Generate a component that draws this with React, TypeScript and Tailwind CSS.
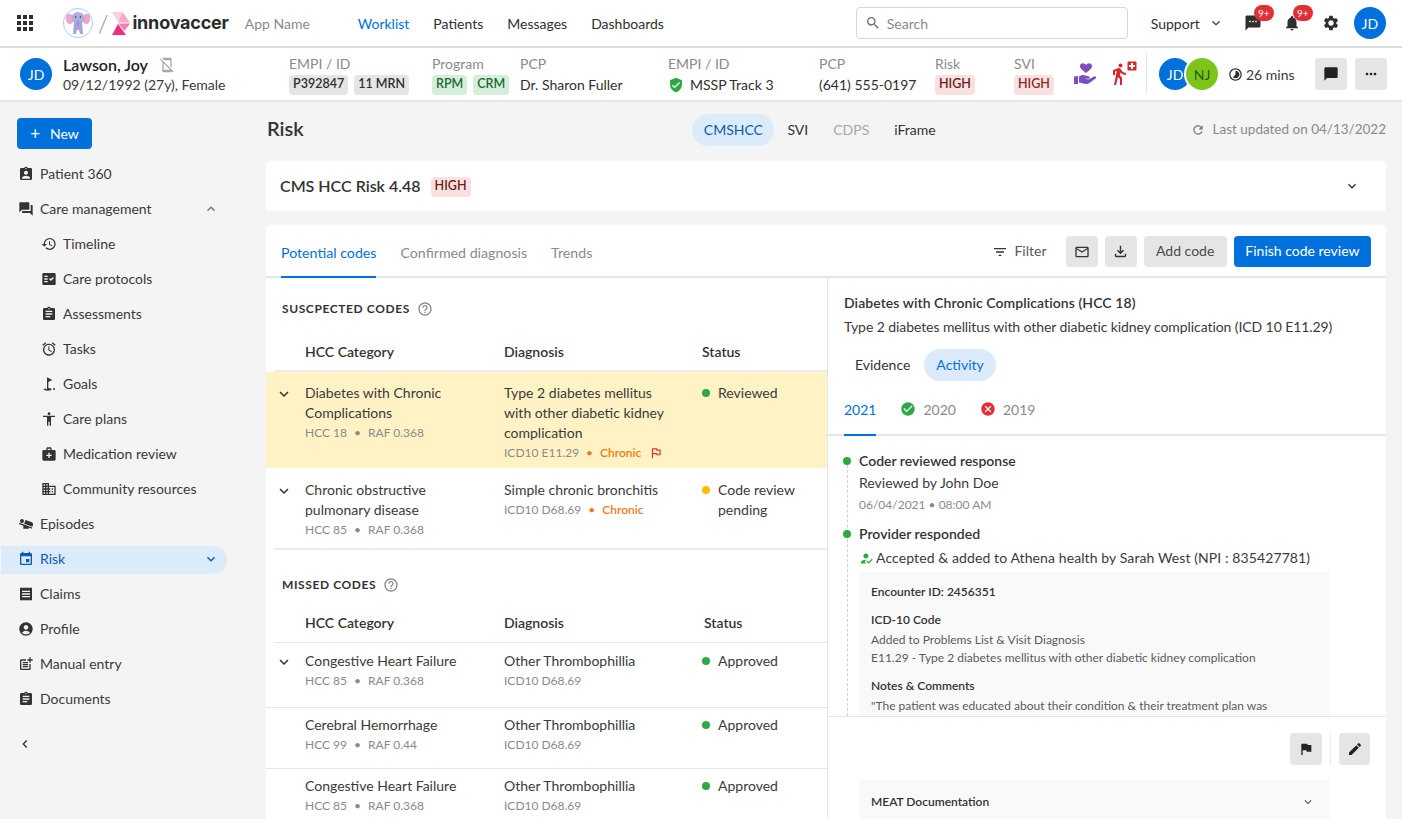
import type { ReactNode } from 'react'
import {
  MdAccessAlarm,
  MdAccessibility,
  MdAccountCircle,
  MdAirlineSeatFlatAngled,
  MdApps,
  MdAssignment,
  MdAssignmentInd,
  MdCancel,
  MdChatBubble,
  MdCheckCircle,
  MdDirectionsWalk,
  MdDomain,
  MdEdit,
  MdEvent,
  MdFactCheck,
  MdFilterList,
  MdFlag,
  MdForum,
  MdGolfCourse,
  MdHelpOutline,
  MdHistory,
  MdHowToReg,
  MdKeyboardArrowDown,
  MdKeyboardArrowLeft,
  MdKeyboardArrowUp,
  MdLocalHospital,
  MdMailOutline,
  MdMedicalServices,
  MdMobileOff,
  MdMoreHoriz,
  MdNotifications,
  MdOutlineFileDownload,
  MdOutlineFlag,
  MdPostAdd,
  MdReceipt,
  MdRefresh,
  MdSearch,
  MdSettings,
  MdSms,
  MdTimelapse,
  MdVerifiedUser,
} from 'react-icons/md'

function Logo() {
  return (
    <div className="flex items-center">
      <svg width="32" height="32" viewBox="0 0 32 32" className="ml-[25px]">
        <circle cx="16" cy="16" r="14.6" fill="#fff" stroke="#a9d0f5" strokeWidth="1" />
        <path d="M11 9 C6 4 3 8 4 13 C5 18 9 18 11 15 Z" fill="#f0a3cf" />
        <path d="M21 9 C26 4 29 8 28 13 C27 18 23 18 21 15 Z" fill="#f0a3cf" />
        <ellipse cx="16" cy="11" rx="6.5" ry="6" fill="#b3aee0" />
        <path d="M12 15 L20 15 L21 27 L18 27 L17 23 L15 23 L14 27 L11 27 Z" fill="#a9a4da" />
        <path d="M15 13 L17 13 L16.6 20 L15.4 20 Z" fill="#9d97d2" />
        <circle cx="13.6" cy="10" r="0.8" fill="#333" />
        <circle cx="18.4" cy="10" r="0.8" fill="#333" />
      </svg>
      <div className="ml-[4px] mr-[4px] text-[24px] leading-none text-[#8a8a8a] font-light">/</div>
      <svg width="18" height="23" viewBox="0 0 18 23">
        <polygon points="0,0 10.5,0 6,10" fill="#fbd0e0" />
        <polygon points="10.5,0 18,10.5 6,10.5" fill="#f9a8c9" />
        <polygon points="6.5,11.5 18,11.5 12.5,19" fill="#f77fb0" />
        <polygon points="0,23 6,12 14,23" fill="#ec2f7f" />
      </svg>
      <span className="ml-[2px] text-[18px] font-bold tracking-[-0.2px] leading-none text-[#2b2b2b] font-['Inter',sans-serif]">
        innovaccer
      </span>
    </div>
  )
}

function CareIcon() {
  return (
    <svg width="24" height="24" viewBox="0 0 24 24" className="ml-[2px] shrink-0 fill-[#7d4ebd]">
      <path d="M13 11 C8.5 7.5 7 6 7 4 C7 2.3 8.3 1.2 9.8 1.2 C11 1.2 12.2 1.9 13 3 C13.8 1.9 15 1.2 16.2 1.2 C17.7 1.2 19 2.3 19 4 C19 6 17.5 7.5 13 11 Z" />
      <path d="M1 14.5 L5 14 L5 22 L1 22 Z M6 14.5 C8 13 10.5 12.5 12.5 13.5 L16 14.5 C17.2 15 17 16.8 15.6 16.8 L11.5 16.5 L15.5 17.6 L21 14.5 C22.6 13.8 23.8 15.3 22.6 16.6 L16.5 21 C15.5 21.8 14 22.2 12.5 22 L6 20.5 Z" />
    </svg>
  )
}

function Badge({ children, color }: { children: ReactNode; color: 'gray' | 'green' | 'red' | 'red2' }) {
  const cls = {
    gray: 'bg-[#e5e5e5] text-[#2f2f2f]',
    green: 'bg-[#d5eedb] text-[#1c6b2d]',
    red: 'bg-[#fae1e1] text-[#6e1b1b]',
    red2: 'bg-[#fae1e1] text-[#8a2a2a]',
  }[color]
  return (
    <span className={`inline-flex h-[20px] items-center rounded-[4px] px-[4px] text-[12.5px] font-semibold ${cls}`}>
      {children}
    </span>
  )
}

function TopBar() {
  return (
    <div className="flex h-[48px] shrink-0 items-center border-b-2 border-[#dcdcdc] bg-white">
      <MdApps className="ml-[13px] text-[24px] text-[#2f2f2f]" />
      <Logo />
      <span className="ml-[16px] w-[113px] text-[14px] text-[#8a8a8a]">App Name</span>
      <nav className="flex w-[498px] gap-[24px] text-[14px] text-[#2f2f2f]">
        <span className="text-[#0070dd]">Worklist</span>
        <span>Patients</span>
        <span>Messages</span>
        <span>Dashboards</span>
      </nav>
      <div className="flex h-[32px] w-[272px] items-center gap-[6px] rounded-[4px] border border-[#d5d5d5] pl-[8px] text-[14px] text-[#8a8a8a]">
        <MdSearch className="text-[16px] text-[#707070]" />
        <span>Search</span>
      </div>
      <span className="ml-[23px] text-[14px] text-[#2f2f2f]">Support</span>
      <MdKeyboardArrowDown className="ml-[8px] text-[16px] text-[#4a4a4a]" />
      <div className="relative ml-[20px]">
        <MdSms className="text-[18px] text-[#2f2f2f]" />
        <span className="absolute -right-[12px] -top-[9px] flex h-[16px] w-[20px] items-center justify-center rounded-full bg-[#e02f36] text-[10px] text-white">
          9+
        </span>
      </div>
      <div className="relative ml-[21px]">
        <MdNotifications className="text-[18px] text-[#2f2f2f]" />
        <span className="absolute -right-[12px] -top-[9px] flex h-[16px] w-[20px] items-center justify-center rounded-full bg-[#e02f36] text-[10px] text-white">
          9+
        </span>
      </div>
      <MdSettings className="ml-[21px] text-[18px] text-[#2f2f2f]" />
      <div className="ml-[14px] flex h-[32px] w-[32px] items-center justify-center rounded-full bg-[#0070dd] text-[14px] text-white">
        JD
      </div>
    </div>
  )
}

function Info({ label, width, children }: { label: string; width: string; children: ReactNode }) {
  return (
    <div className={`mt-[1px] flex shrink-0 flex-col gap-[2px] ${width}`}>
      <span className="text-[14px] leading-[18px] text-[#8a8a8a]">{label}</span>
      <div className="flex h-[20px] items-center gap-[6px] text-[14px] text-[#2f2f2f]">{children}</div>
    </div>
  )
}

function PatientBar() {
  return (
    <div className="flex h-[54px] shrink-0 items-center border-b-2 border-[#e5e5e5] bg-white pl-[20px]">
      <div className="flex h-[32px] w-[32px] shrink-0 items-center justify-center rounded-full bg-[#0070dd] text-[14px] text-white">
        JD
      </div>
      <div className="ml-[11px] mt-[2px] w-[226px] shrink-0">
        <div className="flex items-center gap-[11px] text-[16px] font-semibold leading-[20px] text-[#222]">
          Lawson, Joy
          <MdMobileOff className="text-[16px] text-[#a8a8a8]" />
        </div>
        <div className="text-[14px] leading-[20px] text-[#3a3a3a]">09/12/1992 (27y), Female</div>
      </div>
      <Info label="EMPI / ID" width="w-[143px]">
        <Badge color="gray">P392847</Badge>
        <Badge color="gray">11 MRN</Badge>
      </Info>
      <Info label="Program" width="w-[88px]">
        <Badge color="green">RPM</Badge>
        <Badge color="green">CRM</Badge>
      </Info>
      <Info label="PCP" width="w-[148px]">Dr. Sharon Fuller</Info>
      <Info label="EMPI / ID" width="w-[151px]">
        <MdVerifiedUser className="text-[16px] text-[#2ea843]" />
        MSSP Track 3
      </Info>
      <Info label="PCP" width="w-[116px]">(641) 555-0197</Info>
      <Info label="Risk" width="w-[79px]">
        <Badge color="red">HIGH</Badge>
      </Info>
      <Info label="SVI" width="w-[57px]">
        <Badge color="red2">HIGH</Badge>
      </Info>
      <CareIcon />
      <div className="relative ml-[14px] mr-[11px] h-[26px] w-[24px] shrink-0">
        <MdDirectionsWalk className="absolute -left-[4px] top-[1px] text-[24px] text-[#d8262e]" />
        <MdLocalHospital className="absolute -right-[3px] -top-[1px] text-[12px] text-[#d8262e]" />
      </div>
      <div className="h-[40px] w-px shrink-0 bg-[#e5e5e5]" />
      <div className="ml-[12px] flex shrink-0">
        <div className="flex h-[32px] w-[32px] items-center justify-center rounded-full bg-[#0070dd] text-[14px] text-white">
          JD
        </div>
        <div className="-ml-[5px] flex h-[32px] w-[32px] items-center justify-center rounded-full bg-[#7dc51b] text-[14px] text-[#245c0c] ring-2 ring-white">
          NJ
        </div>
      </div>
      <MdTimelapse className="ml-[10px] shrink-0 text-[15px] text-[#2f2f2f]" />
      <span className="ml-[3px] w-[69px] shrink-0 text-[14px] text-[#3a3a3a]">26 mins</span>
      <div className="flex h-[32px] w-[32px] shrink-0 items-center justify-center rounded-[4px] bg-[#e5e5e5]">
        <MdChatBubble className="text-[16px] text-[#222]" />
      </div>
      <div className="ml-[8px] flex h-[32px] w-[32px] shrink-0 items-center justify-center rounded-[4px] bg-[#e5e5e5]">
        <MdMoreHoriz className="text-[16px] text-[#222]" />
      </div>
    </div>
  )
}

function NavItem({ icon, label, sub, active, caret }: { icon: ReactNode; label: string; sub?: boolean; active?: boolean; caret?: 'up' | 'down' }) {
  return (
    <div
      className={`flex h-[28px] w-[226px] items-center rounded-r-full pb-[2px] text-[14px] ${sub ? 'pl-[40px]' : 'pl-[17px]'} ${
        active ? 'bg-[#dcebf9] text-[#0a5cb0]' : 'text-[#3a3a3a]'
      }`}
    >
      <span className={`flex w-[22px] shrink-0 text-[16px] ${active ? 'text-[#0a5cb0]' : 'text-[#333]'}`}>{icon}</span>
      <span className="flex-1 pb-[2px]">{label}</span>
      {caret === 'up' && <MdKeyboardArrowUp className="mr-[8px] text-[16px] text-[#777]" />}
      {caret === 'down' && <MdKeyboardArrowDown className="mr-[8px] text-[16px] text-[#0a5cb0]" />}
    </div>
  )
}

function Sidebar() {
  return (
    <aside className="flex w-[266px] shrink-0 flex-col pl-px pt-[16px]">
      <div className="ml-[16px] flex h-[31px] w-[75px] items-center justify-center gap-[10px] rounded-[4px] bg-[#0070dd] text-[14px] text-white">
        <span className="text-[17px] leading-none">+</span>
        New
      </div>
      <div className="mt-[12px] flex flex-col gap-[7px]">
        <NavItem icon={<MdAssignmentInd />} label="Patient 360" />
        <NavItem icon={<MdForum />} label="Care management" caret="up" />
        <NavItem sub icon={<MdHistory />} label="Timeline" />
        <NavItem sub icon={<MdFactCheck />} label="Care protocols" />
        <NavItem sub icon={<MdAssignment />} label="Assessments" />
        <NavItem sub icon={<MdAccessAlarm />} label="Tasks" />
        <NavItem sub icon={<MdGolfCourse />} label="Goals" />
        <NavItem sub icon={<MdAccessibility />} label="Care plans" />
        <NavItem sub icon={<MdMedicalServices />} label="Medication review" />
        <NavItem sub icon={<MdDomain />} label="Community resources" />
        <NavItem icon={<MdAirlineSeatFlatAngled />} label="Episodes" />
        <NavItem active icon={<MdEvent />} label="Risk" caret="down" />
        <NavItem icon={<MdReceipt />} label="Claims" />
        <NavItem icon={<MdAccountCircle />} label="Profile" />
        <NavItem icon={<MdPostAdd />} label="Manual entry" />
        <NavItem icon={<MdAssignment />} label="Documents" />
      </div>
      <MdKeyboardArrowLeft className="ml-[16px] mt-[22px] text-[16px] text-[#333]" />
    </aside>
  )
}

function Dot({ color }: { color: string }) {
  return <span className={`mt-[6px] h-[8px] w-[8px] shrink-0 rounded-full ${color}`} />
}

function Sep({ color = 'text-[#8a8a8a]' }: { color?: string }) {
  return <span className={`mx-[7px] ${color}`}>•</span>
}

type RowProps = {
  category: string[]
  hcc: string
  raf: string
  diagnosis: string[]
  icd: string
  chronic?: boolean
  flag?: boolean
  status: string[]
  dot: string
  chevron?: boolean
  highlight?: boolean
  height: string
  top?: string
}

function CodeRow({ category, hcc, raf, diagnosis, icd, chronic, flag, status, dot, chevron, highlight, height, top = 'pt-[11px]' }: RowProps) {
  return (
    <div className={`flex text-[14px] leading-[20px] ${top} ${height} ${highlight ? 'bg-[#fff3c5]' : ''}`}>
      <div className="flex w-[39px] shrink-0 justify-end pr-[12px]">
        {chevron && <MdKeyboardArrowDown className="mt-[2px] text-[18px] text-[#333]" />}
      </div>
      <div className="w-[199px] shrink-0">
        {category.map((line) => (
          <div key={line} className="text-[#3a3a3a]">{line}</div>
        ))}
        <div className="text-[12px] text-[#8a8a8a]">
          {hcc}
          <Sep />
          {raf}
        </div>
      </div>
      <div className="w-[198px] shrink-0">
        {diagnosis.map((line) => (
          <div key={line} className="text-[#3a3a3a]">{line}</div>
        ))}
        <div className="flex items-center text-[12px] text-[#8a8a8a]">
          {icd}
          {chronic && (
            <>
              <Sep color="text-[#f07a14]" />
              <span className="font-semibold text-[#f07a14]">Chronic</span>
            </>
          )}
          {flag && <MdOutlineFlag className="ml-[8px] text-[14px] text-[#e02f36]" />}
        </div>
      </div>
      <div className="flex w-[125px] gap-[8px]">
        <Dot color={dot} />
        <div className="text-[#3a3a3a]">
          {status.map((line) => (
            <div key={line}>{line}</div>
          ))}
        </div>
      </div>
    </div>
  )
}

function SectionTitle({ title, className }: { title: string; className: string }) {
  return (
    <div className={`flex items-center gap-[7px] pl-[16px] text-[12px] font-bold tracking-[0.6px] text-[#333] ${className}`}>
      {title}
      <MdHelpOutline className="text-[16px] text-[#8a8a8a]" />
    </div>
  )
}

function TableHead({ status }: { status: string }) {
  return (
    <div className="ml-[8px] flex h-[20px] text-[14px] font-semibold leading-[20px] text-[#333]">
      <span className="ml-[31px] w-[199px]">HCC Category</span>
      <span className="w-[198px]">Diagnosis</span>
      <span className={status}>Status</span>
    </div>
  )
}

function LeftPane() {
  return (
    <div className="w-[562px] shrink-0 overflow-hidden border-r border-[#e5e5e5]">
      <SectionTitle title="SUSCPECTED CODES" className="mt-[22px] h-[18px]" />
      <div className="mt-[24px]">
        <TableHead status="" />
      </div>
      <div className="ml-[8px] mt-[8px] h-[2px] bg-[#ececec]" />
      <CodeRow
        highlight
        chevron
        flag
        chronic
        height="h-[96px]"
        category={['Diabetes with Chronic', 'Complications']}
        hcc="HCC 18"
        raf="RAF 0.368"
        diagnosis={['Type 2 diabetes mellitus', 'with other diabetic kidney', 'complication']}
        icd="ICD10 E11.29"
        status={['Reviewed']}
        dot="bg-[#2ea843]"
      />
      <CodeRow
        chevron
        chronic
        top="pt-[12px]"
        height="h-[80px]"
        category={['Chronic obstructive', 'pulmonary disease']}
        hcc="HCC 85"
        raf="RAF 0.368"
        diagnosis={['Simple chronic bronchitis']}
        icd="ICD10 D68.69"
        status={['Code review', 'pending']}
        dot="bg-[#ffbb00]"
      />
      <div className="ml-[8px] h-[2px] bg-[#ececec]" />
      <SectionTitle title="MISSED CODES" className="mt-[26px] h-[18px]" />
      <div className="mt-[19px]">
        <TableHead status="ml-[2px]" />
      </div>
      <div className="ml-[8px] mt-[9px] h-px bg-[#e5e5e5]" />
      <CodeRow
        chevron
        top="pt-[8px]"
        height="h-[64px]"
        category={['Congestive Heart Failure']}
        hcc="HCC 85"
        raf="RAF 0.368"
        diagnosis={['Other Thrombophillia']}
        icd="ICD10 D68.69"
        status={['Approved']}
        dot="bg-[#2ea843]"
      />
      <div className="h-px bg-[#e5e5e5]" />
      <CodeRow
        top="pt-[7px]"
        height="h-[60px]"
        category={['Cerebral Hemorrhage']}
        hcc="HCC 99"
        raf="RAF 0.44"
        diagnosis={['Other Thrombophillia']}
        icd="ICD10 D68.69"
        status={['Approved']}
        dot="bg-[#2ea843]"
      />
      <div className="h-px bg-[#e5e5e5]" />
      <CodeRow
        top="pt-[7px]"
        height="h-[64px]"
        category={['Congestive Heart Failure']}
        hcc="HCC 85"
        raf="RAF 0.368"
        diagnosis={['Other Thrombophillia']}
        icd="ICD10 D68.69"
        status={['Approved']}
        dot="bg-[#2ea843]"
      />
    </div>
  )
}

function RightPane() {
  return (
    <div className="flex min-w-0 flex-1 flex-col overflow-hidden">
      <div className="px-[16px] pt-[15px]">
        <div className="text-[14px] font-semibold leading-[20px] tracking-[0.07px] text-[#333]">Diabetes with Chronic Complications (HCC 18)</div>
        <div className="mt-[4px] text-[14px] leading-[20px] tracking-[-0.08px] text-[#3a3a3a]">
          Type 2 diabetes mellitus with other diabetic kidney complication (ICD 10 E11.29)
        </div>
        <div className="mt-[12px] flex items-center gap-[2px] text-[14px]">
          <span className="px-[11px] pb-[2px] text-[#333]">Evidence</span>
          <span className="ml-px flex h-[32px] items-center rounded-full bg-[#dcebf9] px-[12px] pb-[2px] text-[#0070dd]">Activity</span>
        </div>
      </div>
      <div className="mt-[10px] flex h-[45px] shrink-0 gap-[24px] border-b-2 border-[#e5e5e5] pl-[16px] text-[14px] text-[#8a8a8a]">
        <span className="-mb-[2px] border-b-2 border-[#0070dd] pt-[8px] text-[#0070dd]">2021</span>
        <span className="flex h-[36px] items-center gap-[7px]">
          <MdCheckCircle className="text-[16px] text-[#2ea843]" />
          2020
        </span>
        <span className="flex h-[36px] items-center gap-[7px]">
          <MdCancel className="text-[16px] text-[#e02f36]" />
          2019
        </span>
      </div>
      <div className="relative h-[281px] shrink-0 overflow-hidden border-b border-[#e5e5e5] pl-[31px] pt-[15px] text-[14px] leading-[20px]">
        <div className="absolute bottom-0 left-[19px] top-[24px] border-l border-dashed border-[#cfcfcf]" />
        <span className="absolute left-[15px] top-[21px] h-[8px] w-[8px] rounded-full bg-[#2ea843]" />
        <span className="absolute left-[15px] top-[94px] h-[8px] w-[8px] rounded-full bg-[#2ea843]" />
        <div className="font-semibold text-[#333]">Coder reviewed response</div>
        <div className="mt-[2px] text-[#3a3a3a]">Reviewed by John Doe</div>
        <div className="mt-[2px] text-[12px] text-[#8a8a8a]">06/04/2021 • 08:00 AM</div>
        <div className="mt-[9px] font-semibold text-[#333]">Provider responded</div>
        <div className="mt-[4px] flex items-center gap-[2px] tracking-[0.1px] text-[#3a3a3a]">
          <MdHowToReg className="text-[15px] text-[#2ea843]" />
          Accepted &amp; added to Athena health by Sarah West (NPI : 835427781)
        </div>
        <div className="mt-[4px] w-[471px] bg-[#faf9fa] px-[12px] pt-[11px] text-[12px] leading-[18px]">
          <div className="font-semibold text-[#333]">Encounter ID: 2456351</div>
          <div className="mt-[10px] font-semibold text-[#333]">ICD-10 Code</div>
          <div className="mt-[2px] text-[#5a5a5a]">Added to Problems List &amp; Visit Diagnosis</div>
          <div className="text-[#5a5a5a]">E11.29 - Type 2 diabetes mellitus with other diabetic kidney complication</div>
          <div className="mt-[10px] font-semibold text-[#333]">Notes &amp; Comments</div>
          <div className="mt-[2px] text-[#5a5a5a]">"The patient was educated about their condition &amp; their treatment plan was</div>
          <div className="text-[#5a5a5a]">explained in detail to them. The patient understands and agreed with the HCP</div>
        </div>
      </div>
      <div className="flex items-center justify-end pr-[16px] pt-[16px]">
        <div className="flex h-[32px] w-[32px] items-center justify-center rounded-[4px] bg-[#e5e5e5]">
          <MdFlag className="text-[16px] text-[#222]" />
        </div>
        <div className="mx-[8px] h-[32px] w-px bg-[#ececec]" />
        <div className="flex h-[32px] w-[31px] items-center justify-center rounded-[4px] bg-[#e5e5e5]">
          <MdEdit className="text-[16px] text-[#222]" />
        </div>
      </div>
      <div className="ml-[31px] mt-[15px] flex h-[40px] w-[471px] shrink-0 items-center justify-between bg-[#faf9fa] pl-[12px] pr-[15px] pt-[4px] text-[12px] font-semibold text-[#333]">
        MEAT Documentation
        <MdKeyboardArrowDown className="text-[14px] text-[#555]" />
      </div>
    </div>
  )
}

function Main() {
  return (
    <main className="flex w-[1120px] shrink-0 flex-col">
      <div className="flex h-[59px] shrink-0 items-center justify-between pb-[4px] pl-px">
        <h1 className="w-[340px] pb-[4px] text-[20px] font-semibold text-[#333]">Risk</h1>
        <div className="-ml-[13px] flex items-center gap-[1px] text-[14px]">
          <span className="flex h-[32px] items-center rounded-full bg-[#dcebf9] px-[11.5px] text-[#0a5cb0]">CMSHCC</span>
          <span className="px-[12px] text-[#333]">SVI</span>
          <span className="px-[12px] text-[#a8a8a8]">CDPS</span>
          <span className="px-[12px] text-[#333]">iFrame</span>
        </div>
        <div className="flex w-[340px] items-center justify-end gap-[8px] text-[13.5px] text-[#8a8a8a]">
          <MdRefresh className="text-[14px] text-[#777]" />
          Last updated on 04/13/2022
        </div>
      </div>
      <div className="flex h-[50px] shrink-0 items-center justify-between rounded-[4px] bg-white pl-[14px] pr-[26px]">
        <div className="flex items-center gap-[10px]">
          <span className="text-[16px] font-semibold text-[#333]">CMS HCC Risk 4.48</span>
          <span className="mt-px flex">
            <Badge color="red">HIGH</Badge>
          </span>
        </div>
        <MdKeyboardArrowDown className="text-[16px] text-[#333]" />
      </div>
      <div className="mt-[14px] flex min-h-0 flex-1 flex-col rounded-t-[4px] bg-white">
        <div className="flex h-[53px] shrink-0 items-start justify-between border-b-2 border-[#e5e5e5] pl-[15px] pr-[15px]">
          <div className="flex gap-[24px] text-[14.2px] text-[#8a8a8a]">
            <span className="h-[53px] border-b-2 border-[#0070dd] pt-[17px] text-[#0070dd]">Potential codes</span>
            <span className="pt-[17px]">Confirmed diagnosis</span>
            <span className="pt-[17px]">Trends</span>
          </div>
          <div className="mt-[11px] flex items-center text-[14px]">
            <MdFilterList className="text-[16px] text-[#333]" />
            <span className="ml-[6px] pb-[2px] text-[#5a5a5a]">Filter</span>
            <div className="ml-[19px] flex h-[31px] w-[32px] items-center justify-center rounded-[4px] bg-[#e5e5e5]">
              <MdMailOutline className="text-[16px] text-[#333]" />
            </div>
            <div className="ml-[7px] flex h-[31px] w-[32px] items-center justify-center rounded-[4px] bg-[#e5e5e5]">
              <MdOutlineFileDownload className="text-[17px] text-[#333]" />
            </div>
            <div className="ml-[7px] flex h-[31px] items-center rounded-[4px] bg-[#e5e5e5] px-[12.5px] pb-[2px] text-[#4a4a4a]">Add code</div>
            <div className="ml-[7px] flex h-[31px] items-center rounded-[4px] bg-[#0070dd] px-[11.5px] pb-[2px] text-white">Finish code review</div>
          </div>
        </div>
        <div className="flex min-h-0 flex-1">
          <LeftPane />
          <RightPane />
        </div>
      </div>
    </main>
  )
}

export default function App() {
  return (
    <div className="flex h-[819px] w-[1402px] flex-col overflow-hidden bg-[#f4f4f4] font-['Lato',sans-serif]">
      <TopBar />
      <PatientBar />
      <div className="flex min-h-0 flex-1">
        <Sidebar />
        <Main />
      </div>
    </div>
  )
}
